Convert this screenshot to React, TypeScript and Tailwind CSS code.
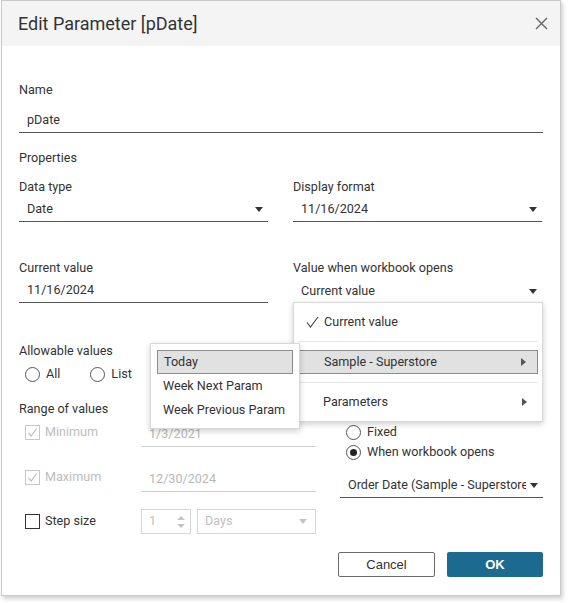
import React from 'react';

const FONT = { fontFamily: 'Roboto, "Liberation Sans", Arial, sans-serif' };

function Caret({ className = '' }: { className?: string }) {
  return (
    <svg width="8" height="5" viewBox="0 0 8 5" className={className}>
      <path d="M0 0 H8 L4 5 Z" fill="#333" />
    </svg>
  );
}

function CaretRight({ className = '' }: { className?: string }) {
  return (
    <svg width="5" height="8" viewBox="0 0 5 8" className={className}>
      <path d="M0 0 V8 L5 4 Z" fill="#555" />
    </svg>
  );
}

function Radio({ checked = false }: { checked?: boolean }) {
  return (
    <span className="w-[15px] h-[15px] rounded-full border border-[#555] bg-white flex items-center justify-center shrink-0">
      {checked && <span className="w-[7px] h-[7px] rounded-full bg-[#222]" />}
    </span>
  );
}

function Check({ checked = false, disabled = false }: { checked?: boolean; disabled?: boolean }) {
  return (
    <span
      className={`w-[15px] h-[15px] border flex items-center justify-center shrink-0 ${
        disabled ? 'border-[#c8c8c8]' : 'border-[#333]'
      }`}
    >
      {checked && (
        <svg width="11" height="11" viewBox="0 0 11 11">
          <path d="M1.5 6 L4.2 9 L9.5 1.5" fill="none" stroke={disabled ? '#c0c0c0' : '#333'} strokeWidth="1.2" />
        </svg>
      )}
    </span>
  );
}

function Field({ value, caret = false, className = '', muted = false }: { value: string; caret?: boolean; className?: string; muted?: boolean }) {
  return (
    <div
      className={`h-[24px] flex items-center justify-between pl-[8px] pr-[5px] border-b ${
        muted ? 'border-[#d0d0d0] text-[#b8b8b8]' : 'border-[#555] text-[#333]'
      } ${className}`}
    >
      <span className="whitespace-nowrap overflow-hidden">{value}</span>
      {caret && <Caret className="shrink-0 ml-1" />}
    </div>
  );
}

function Label({ children, className = '' }: { children: React.ReactNode; className?: string }) {
  return <div className={`h-[16px] leading-[16px] text-[#333] ${className}`}>{children}</div>;
}

export default function App() {
  return (
    <div className="relative w-[569px] h-[603px] bg-white text-[12.6px] overflow-hidden" style={FONT}>
      <div className="absolute left-[1px] top-0 w-[560px] h-[596px] bg-white border border-[#c9c9c9] shadow-[2px_3px_4px_rgba(0,0,0,0.18)] flex flex-col">
        <div className="h-[45px] bg-[#f4f4f4] flex items-center justify-between pl-[16px] pr-[12px] shrink-0">
          <span className="text-[18px] text-[#333]">Edit Parameter [pDate]</span>
          <svg width="13" height="13" viewBox="0 0 13 13">
            <path d="M1 1 L12 12 M12 1 L1 12" stroke="#666" strokeWidth="1.4" />
          </svg>
        </div>

        <div className="px-[17px] flex flex-col">
          <Label className="mt-[36px]">Name</Label>
          <Field value="pDate" className="mt-[11px]" />

          <Label className="mt-[17px]">Properties</Label>

          <div className="grid grid-cols-[249px_249px] gap-x-[25px] mt-[13px]">
            <div className="flex flex-col">
              <Label>Data type</Label>
              <Field value="Date" caret className="mt-[3px]" />
              <Label className="mt-[38px]">Current value</Label>
              <Field value="11/16/2024" className="mt-[3px]" />
            </div>
            <div className="flex flex-col">
              <Label>Display format</Label>
              <Field value="11/16/2024" caret className="mt-[3px]" />
              <Label className="mt-[38px]">Value when workbook opens</Label>
              <Field value="Current value" caret className="mt-[4px]" />
            </div>
          </div>

          <Label className="mt-[39px]">Allowable values</Label>
          <div className="flex items-center h-[16px] mt-[7px] pl-[6px] text-[#333]">
            <Radio />
            <span className="ml-[6px]">All</span>
            <span className="ml-[30px]"><Radio /></span>
            <span className="ml-[6px]">List</span>
          </div>

          <Label className="mt-[19px]">Range of values</Label>

          <div className="grid grid-cols-[297px_203px] gap-x-[24px] mt-[7px]">
            <div className="flex flex-col">
              <div className="flex items-start">
                <div className="w-[122px] flex items-center h-[16px] pl-[6px] text-[#bdbdbd]">
                  <Check checked disabled />
                  <span className="ml-[5px]">Minimum</span>
                </div>
                <Field value="1/3/2021" muted className="w-[175px] -mt-[1px]" />
              </div>
              <div className="flex items-start mt-[22px]">
                <div className="w-[122px] flex items-center h-[16px] pl-[6px] text-[#bdbdbd]">
                  <Check checked disabled />
                  <span className="ml-[5px]">Maximum</span>
                </div>
                <Field value="12/30/2024" muted className="w-[175px] -mt-[1px]" />
              </div>
              <div className="flex items-center mt-[17px] h-[25px]">
                <div className="w-[122px] flex items-center h-[16px] pl-[6px] text-[#333]">
                  <Check />
                  <span className="ml-[5px]">Step size</span>
                </div>
                <div className="w-[50px] h-[25px] border border-[#d6d6d6] flex items-center justify-between pl-[7px] pr-[5px] text-[#c0c0c0]">
                  <span>1</span>
                  <svg width="8" height="14" viewBox="0 0 8 14">
                    <path d="M0 5 L4 1 L8 5 Z M0 9 L4 13 L8 9 Z" fill="#c4c4c4" />
                  </svg>
                </div>
                <div className="ml-[6px] w-[119px] h-[25px] border border-[#d6d6d6] flex items-center justify-between pl-[7px] pr-[8px] text-[#c0c0c0]">
                  <span>Days</span>
                  <svg width="8" height="5" viewBox="0 0 8 5">
                    <path d="M0 0 H8 L4 5 Z" fill="#c4c4c4" />
                  </svg>
                </div>
              </div>
            </div>
            <div className="flex flex-col">
              <div className="flex items-center h-[16px] pl-[6px] text-[#333]">
                <Radio />
                <span className="ml-[6px]">Fixed</span>
              </div>
              <div className="flex items-center h-[16px] pl-[6px] mt-[4px] text-[#333]">
                <Radio checked />
                <span className="ml-[6px]">When workbook opens</span>
              </div>
              <Field value="Order Date (Sample - Superstore)" caret className="mt-[14px]" />
            </div>
          </div>

          <div className="flex justify-end gap-[12px] mt-[18px]">
            <button className="w-[97px] h-[25px] border border-[#6b6b6b] rounded-[2px] bg-white text-[#333] text-[13px]" style={{ fontFamily: '"Liberation Sans", Arial, sans-serif' }}>
              Cancel
            </button>
            <button className="w-[96px] h-[25px] rounded-[2px] bg-[#1c6a8f] text-white font-bold text-[13px]" style={{ fontFamily: '"Liberation Sans", Arial, sans-serif' }}>
              OK
            </button>
          </div>
        </div>
      </div>

      {/* value-when-open menu */}
      <div className="absolute left-[293px] top-[302px] w-[250px] h-[120px] bg-white border border-[#d8d8d8] shadow-[0_2px_6px_rgba(0,0,0,0.2)] text-[#333]">
        <div className="h-[38px] flex items-center pl-[12px]">
          <svg width="13" height="12" viewBox="0 0 13 12">
            <path d="M1 6.5 L4.5 11 L12 1" fill="none" stroke="#444" strokeWidth="1.1" />
          </svg>
          <span className="ml-[5px]">Current value</span>
        </div>
        <div className="mx-[4px] border-t border-[#e6e6e6]" />
        <div className="mx-[4px] mt-[8px] h-[24px] bg-[#e1e1e1] border border-[#8c8c8c] flex items-center justify-between pl-[25px] pr-[11px]">
          <span>Sample - Superstore</span>
          <CaretRight />
        </div>
        <div className="mx-[4px] mt-[8px] border-t border-[#e6e6e6]" />
        <div className="h-[38px] flex items-center justify-between pl-[29px] pr-[15px]">
          <span>Parameters</span>
          <CaretRight />
        </div>
      </div>

      {/* submenu */}
      <div className="absolute left-[150px] top-[343px] w-[150px] h-[86px] bg-white border border-[#d8d8d8] shadow-[0_2px_6px_rgba(0,0,0,0.2)] text-[#333]">
        <div className="mx-[6px] mt-[6px] h-[24px] bg-[#e1e1e1] border border-[#8c8c8c] flex items-center pl-[6px]">
          Today
        </div>
        <div className="h-[24px] flex items-center pl-[12px]">Week Next Param</div>
        <div className="h-[24px] flex items-center pl-[12px]">Week Previous Param</div>
      </div>
    </div>
  );
}
